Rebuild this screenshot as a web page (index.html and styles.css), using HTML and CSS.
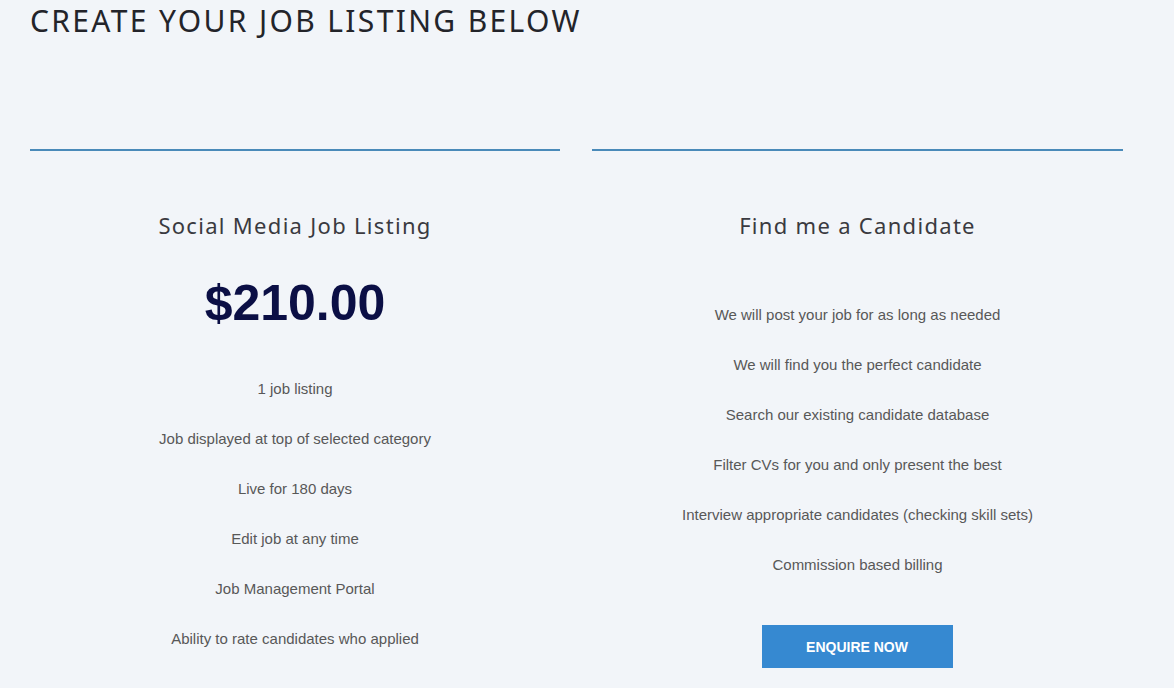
FILE: index.html
```html
<!DOCTYPE html>
<html>
<head>
<meta charset="utf-8">
<link rel="stylesheet" href="styles.css">
</head>
<body>
<div class="page">
  <h1 class="page-title">CREATE YOUR JOB LISTING BELOW</h1>
  <div class="plans">
    <div class="plan">
      <h2 class="plan-title">Social Media Job Listing</h2>
      <div class="plan-price">$210.00</div>
      <ul class="features features-priced">
        <li>1 job listing</li>
        <li>Job displayed at top of selected category</li>
        <li>Live for 180 days</li>
        <li>Edit job at any time</li>
        <li>Job Management Portal</li>
        <li>Ability to rate candidates who applied</li>
      </ul>
    </div>
    <div class="plan">
      <h2 class="plan-title">Find me a Candidate</h2>
      <ul class="features features-unpriced">
        <li>We will post your job for as long as needed</li>
        <li>We will find you the perfect candidate</li>
        <li>Search our existing candidate database</li>
        <li>Filter CVs for you and only present the best</li>
        <li>Interview appropriate candidates (checking skill sets)</li>
        <li>Commission based billing</li>
      </ul>
      <a class="btn" href="#">ENQUIRE NOW</a>
    </div>
  </div>
</div>
</body>
</html>
```
FILE: styles.css
```css
html, body {
  margin: 0;
  padding: 0;
  background: #f2f5f9;
}
.page {
  padding: 3px 0 0 30px;
  width: 1093px;
}
.page-title {
  margin: 0;
  font-family: "Noto Sans", "Open Sans", sans-serif;
  font-weight: 400;
  font-size: 30px;
  line-height: 36px;
  letter-spacing: 2.35px;
  color: #23242a;
}
.plans {
  margin-top: 110px;
  display: grid;
  grid-template-columns: 530px 531px;
  column-gap: 32px;
}
.plan {
  border-top: 2px solid #4a8ab9;
  display: flex;
  flex-direction: column;
  align-items: center;
  padding-top: 59px;
}
.plan-title {
  margin: 0;
  font-family: "Noto Sans", "Open Sans", sans-serif;
  font-weight: 400;
  font-size: 22px;
  line-height: 30px;
  letter-spacing: 1.3px;
  color: #3a3a40;
}
.plan-price {
  margin-top: 33px;
  font-family: "Liberation Sans", Arial, sans-serif;
  font-weight: 700;
  font-size: 50px;
  line-height: 60px;
  color: #0b0f45;
}
.features {
  list-style: none;
  margin: 0;
  padding: 0;
  display: flex;
  flex-direction: column;
  align-items: center;
  gap: 30px;
  font-family: "Liberation Sans", Arial, sans-serif;
  font-size: 15px;
  line-height: 20px;
  color: #585858;
}
.features-priced {
  margin-top: 46px;
}
.features-unpriced {
  margin-top: 65px;
}
.btn {
  margin-top: 50px;
  margin-right: 1px;
  width: 191px;
  height: 43px;
  display: flex;
  align-items: center;
  justify-content: center;
  background: #3689d1;
  color: #ffffff;
  font-family: "Liberation Sans", Arial, sans-serif;
  font-weight: 700;
  font-size: 14px;
  text-decoration: none;
}
```
